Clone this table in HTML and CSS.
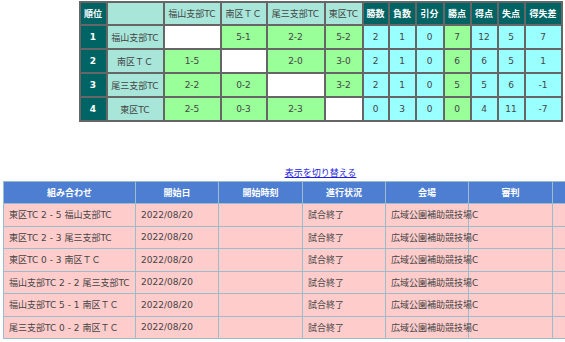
FILE: index.html
```html
<!DOCTYPE html>
<html lang="ja">
<head>
<meta charset="utf-8">
<link rel="stylesheet" href="styles.css">
</head>
<body>
<div class="viewport">
<div class="page">
  <table class="standings">
    <colgroup>
      <col class="w25"><col class="w55"><col class="w55"><col class="w44"><col class="w56"><col class="w36">
      <col class="w24"><col class="w25"><col class="w26"><col class="w25"><col class="w25"><col class="w25"><col class="w35">
    </colgroup>
    <tr>
      <th class="hd">順位</th>
      <th class="team"></th>
      <th class="team">福山支部TC</th>
      <th class="team">南区ＴＣ</th>
      <th class="team">尾三支部TC</th>
      <th class="team">東区TC</th>
      <th class="hd">勝数</th>
      <th class="hd">負数</th>
      <th class="hd">引分</th>
      <th class="hd">勝点</th>
      <th class="hd">得点</th>
      <th class="hd">失点</th>
      <th class="hd">得失差</th>
    </tr>
    <tr>
      <td class="hd">1</td><td class="team">福山支部TC</td>
      <td class="self"></td><td class="sc">5-1</td><td class="sc">2-2</td><td class="sc">5-2</td>
      <td class="st">2</td><td class="st">1</td><td class="st">0</td><td class="sc">7</td><td class="st">12</td><td class="st">5</td><td class="st">7</td>
    </tr>
    <tr>
      <td class="hd">2</td><td class="team">南区ＴＣ</td>
      <td class="sc">1-5</td><td class="self"></td><td class="sc">2-0</td><td class="sc">3-0</td>
      <td class="st">2</td><td class="st">1</td><td class="st">0</td><td class="sc">6</td><td class="st">6</td><td class="st">5</td><td class="st">1</td>
    </tr>
    <tr>
      <td class="hd">3</td><td class="team">尾三支部TC</td>
      <td class="sc">2-2</td><td class="sc">0-2</td><td class="self"></td><td class="sc">3-2</td>
      <td class="st">2</td><td class="st">1</td><td class="st">0</td><td class="sc">5</td><td class="st">5</td><td class="st">6</td><td class="st">-1</td>
    </tr>
    <tr>
      <td class="hd">4</td><td class="team">東区TC</td>
      <td class="sc">2-5</td><td class="sc">0-3</td><td class="sc">2-3</td><td class="self"></td>
      <td class="st">0</td><td class="st">3</td><td class="st">0</td><td class="sc">0</td><td class="st">4</td><td class="st">11</td><td class="st">-7</td>
    </tr>
  </table>

  <div class="switch"><a href="#">表示を切り替える</a></div>

  <table class="matches">
    <colgroup>
      <col class="m1"><col class="m2"><col class="m3"><col class="m4"><col class="m5"><col class="m6"><col class="m7">
    </colgroup>
    <tr>
      <th>組み合わせ</th><th>開始日</th><th>開始時刻</th><th>進行状況</th><th>会場</th><th>審判</th><th></th>
    </tr>
    <tr><td>東区TC 2 - 5 福山支部TC</td><td>2022/08/20</td><td></td><td>試合終了</td><td>広域公園補助競技場C</td><td></td><td></td></tr>
    <tr><td>東区TC 2 - 3 尾三支部TC</td><td>2022/08/20</td><td></td><td>試合終了</td><td>広域公園補助競技場C</td><td></td><td></td></tr>
    <tr><td>東区TC 0 - 3 南区ＴＣ</td><td>2022/08/20</td><td></td><td>試合終了</td><td>広域公園補助競技場C</td><td></td><td></td></tr>
    <tr><td>福山支部TC 2 - 2 尾三支部TC</td><td>2022/08/20</td><td></td><td>試合終了</td><td>広域公園補助競技場C</td><td></td><td></td></tr>
    <tr><td>福山支部TC 5 - 1 南区ＴＣ</td><td>2022/08/20</td><td></td><td>試合終了</td><td>広域公園補助競技場C</td><td></td><td></td></tr>
    <tr><td>尾三支部TC 0 - 2 南区ＴＣ</td><td>2022/08/20</td><td></td><td>試合終了</td><td>広域公園補助競技場C</td><td></td><td></td></tr>
  </table>
</div>
</div>
</body>
</html>
```

FILE: styles.css
```css
html, body {
  margin: 0;
  padding: 0;
  background: #ffffff;
  overflow: hidden;
}
body {
  font-family: "DejaVu Sans", "Noto Sans CJK JP", sans-serif;
  font-size: 9px;
  color: #333333;
}
.viewport {
  width: 100%;
  overflow: hidden;
}
.page {
  width: 635px;
  padding: 1px 3px 0 3px;
}

/* standings */
.standings {
  margin: 0 auto;
  border-collapse: separate;
  border-spacing: 2px;
  background: #666666;
  table-layout: fixed;
}
.standings th, .standings td {
  padding: 0;
  text-align: center;
  vertical-align: middle;
  height: 22px;
  white-space: nowrap;
  font-weight: normal;
  overflow: hidden;
}
.standings tr:first-child th { height: 21px; }
.standings .hd {
  background: #006464;
  color: #ffffff;
  font-weight: bold;
}
.standings .team { background: #a8e6da; color: #444; }
.standings .self { background: #ffffff; }
.standings .sc { background: #99ff99; color: #444; }
.standings .st { background: #99ffff; color: #444; }

.w24 { width: 24px; }
.w25 { width: 25px; }
.w26 { width: 26px; }
.w35 { width: 35px; }
.w36 { width: 36px; }
.w44 { width: 44px; }
.w55 { width: 55px; }
.w56 { width: 56px; }

/* switch link */
.switch {
  text-align: center;
  margin-top: 44px;
  height: 15px;
  line-height: 15px;
}
.switch a {
  color: #2222dd;
  text-decoration: underline;
}

/* matches */
.matches {
  width: 635px;
  border-collapse: collapse;
  table-layout: fixed;
}
.matches th, .matches td {
  border: 1px solid #9bbccb;
  height: 21.5px;
  padding: 0 0 0 5px;
  white-space: nowrap;
  overflow: visible;
  vertical-align: middle;
  text-align: left;
}
.matches th {
  background: #4d7ed2;
  color: #ffffff;
  font-weight: bold;
  text-align: center;
  padding: 0;
  height: 21px;
}
.matches td { background: #ffcccc; color: #444; }
.m1 { width: 132px; }
.m2 { width: 83px; }
.m3 { width: 84px; }
.m4 { width: 83px; }
.m5 { width: 83px; }
.m6 { width: 84px; }
.m7 { width: 86px; }
```
